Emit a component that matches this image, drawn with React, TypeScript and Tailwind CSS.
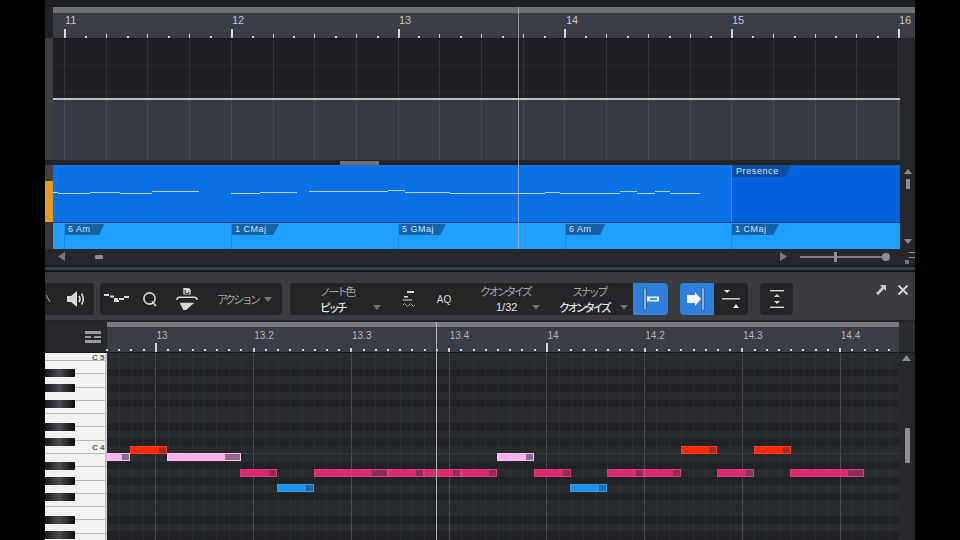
import React from 'react';

const latin = "font-['Liberation_Sans',sans-serif]";
const cjk = "font-['Noto_Sans_CJK_JP',sans-serif]";

// x positions are relative to the ruler, which starts at screen x 53
const topBars = [
  { label: '11', x: 11 },
  { label: '12', x: 178 },
  { label: '13', x: 345 },
  { label: '14', x: 512 },
  { label: '15', x: 678 },
  { label: '16', x: 845 },
];
const topStep = 20.85;

const wave = [
  [8, 13, 192], [13, 45, 193], [45, 75, 192], [75, 107, 193], [107, 154, 191],
  [186, 215, 193], [215, 252, 192], [264, 343, 191], [343, 360, 190], [360, 405, 192],
  [405, 473, 193], [473, 500, 193], [500, 515, 192], [515, 575, 193], [575, 592, 191],
  [592, 610, 193], [610, 625, 191], [625, 655, 193],
];

const chords = [
  { label: '6 Am', x: 19, w: 40 },
  { label: '1 CMaj', x: 186, w: 48 },
  { label: '5 GMaj', x: 353, w: 48 },
  { label: '6 Am', x: 520, w: 40 },
  { label: '1 CMaj', x: 686, w: 48 },
];

// piano roll
const beatW = 97.75;
const rowH = 7.75;
const gridLeft = 107;
const rollBeats = [
  { label: '13', x: 155, big: true },
  { label: '13.2', x: 252.75 },
  { label: '13.3', x: 350.5 },
  { label: '13.4', x: 448.25 },
  { label: '14', x: 546, big: true },
  { label: '14.2', x: 643.75 },
  { label: '14.3', x: 741.5 },
  { label: '14.4', x: 839.25 },
];

const PINK = 'bg-[#fdb4ee]';
const RED = 'bg-[#ff2a0c]';
const MAGENTA = 'bg-[#d9296f]';
const BLUE = 'bg-[#1c93ec]';
const notes = [
  { x1: 107, x2: 130, row: 13, c: PINK, tab: 'bg-[#8e6a8c]' },
  { x1: 130, x2: 167, row: 12, c: RED, tab: 'bg-[#a32d1c]' },
  { x1: 167, x2: 241, row: 13, c: PINK, tab: 'bg-[#8e6a8c]' },
  { x1: 240, x2: 277, row: 15, c: MAGENTA, tab: 'bg-[#8c2e58]' },
  { x1: 277, x2: 314, row: 17, c: BLUE, tab: 'bg-[#1c6aa6]' },
  { x1: 314, x2: 388, row: 15, c: MAGENTA, tab: 'bg-[#8c2e58]' },
  { x1: 388, x2: 424, row: 15, c: MAGENTA, tab: 'bg-[#8c2e58]' },
  { x1: 424, x2: 461, row: 15, c: MAGENTA, tab: 'bg-[#8c2e58]' },
  { x1: 461, x2: 497, row: 15, c: MAGENTA, tab: 'bg-[#8c2e58]' },
  { x1: 497, x2: 534, row: 13, c: PINK, tab: 'bg-[#8e6a8c]' },
  { x1: 534, x2: 571, row: 15, c: MAGENTA, tab: 'bg-[#8c2e58]' },
  { x1: 570, x2: 607, row: 17, c: BLUE, tab: 'bg-[#1c6aa6]' },
  { x1: 607, x2: 644, row: 15, c: MAGENTA, tab: 'bg-[#8c2e58]' },
  { x1: 644, x2: 681, row: 15, c: MAGENTA, tab: 'bg-[#8c2e58]' },
  { x1: 681, x2: 717, row: 12, c: RED, tab: 'bg-[#a32d1c]' },
  { x1: 717, x2: 754, row: 15, c: MAGENTA, tab: 'bg-[#8c2e58]' },
  { x1: 754, x2: 791, row: 12, c: RED, tab: 'bg-[#a32d1c]' },
  { x1: 790, x2: 864, row: 15, c: MAGENTA, tab: 'bg-[#8c2e58]' },
];

const blackRows = [2, 4, 6, 9, 11, 14, 16, 18, 21, 23];
const rowCount = 24;

const labelCls = `text-[11px] leading-[14px] tracking-[-2.6px] whitespace-nowrap text-[#a3a5a8] ${cjk}`;
const valueCls = `text-[11px] leading-[14px] tracking-[-2.6px] whitespace-nowrap font-medium text-[#e4e5e6] ${cjk}`;

function Tri({ down = true, className = 'text-[#77797c]', w = 8, h = 5 }: { down?: boolean; className?: string; w?: number; h?: number }) {
  return (
    <svg width={w} height={h} viewBox="0 0 8 5" preserveAspectRatio="none" className={className}>
      <polygon points={down ? '0,0 8,0 4,5' : '4,0 8,5 0,5'} fill="currentColor" />
    </svg>
  );
}

function TopRuler() {
  const ticks = Array.from({ length: 41 }, (_, i) => i);
  return (
    <div className="relative h-[25px] bg-[#3a3c46]">
      {topBars.map((b) => (
        <span key={b.label} className={`absolute top-[1px] text-[11px] leading-[13px] text-[#c4c6ca] ${latin}`} style={{ left: b.x + 1 }}>
          {b.label}
        </span>
      ))}
      {ticks.map((i) => {
        const left = 11 + i * topStep;
        if (i % 8 === 0) return <div key={i} className="absolute bottom-0 w-[2px] h-[9px] bg-[#d5d6d8]" style={{ left }} />;
        if (i % 2 === 0) return <div key={i} className="absolute bottom-0 w-[1px] h-[4px] bg-[#cfd0d2]" style={{ left }} />;
        return <div key={i} className="absolute bottom-0 w-[2px] h-[2px] bg-[#cfd0d2]" style={{ left }} />;
      })}
    </div>
  );
}

function BarLines({ strong = 'bg-[#4b4e55]' }: { strong?: string }) {
  return (
    <>
      {Array.from({ length: 21 }, (_, i) => (
        <div key={i} className={`absolute top-0 bottom-0 w-[1px] ${strong}`} style={{ left: 11 + i * topStep * 2 }} />
      ))}
    </>
  );
}

function Arrangement() {
  return (
    <div className="flex">
      <div className="w-[8px] flex flex-col">
        <div className="h-[31px] bg-[#202226]" />
        <div className="h-[122px] bg-[#3e4044]" />
        <div className="h-[5px] bg-[#222427]" />
        <div className="h-[16px] bg-[#3e4044]" />
        <div className="h-[41px] bg-[#e09a26]" />
        <div className="h-[27px] bg-[#34363a]" />
      </div>
      <div className="flex-1 min-w-0">
        <div className="h-[6px] bg-[#6e6f71]" />
        <TopRuler />
        <div className="flex">
          <div className="w-[847px] relative">
            <div className="relative h-[60px] bg-[#1f2023] border-t border-[#17181a]">
              <div className="absolute left-0 right-0 top-[26px] h-[1px] bg-[#29292c]" />
              <div className="absolute left-0 right-0 top-[53px] h-[1px] bg-[#29292c]" />
              <BarLines strong="bg-[#323337]" />
            </div>
            <div className="h-[2px] bg-[#bfc0c2]" />
            <div className="relative h-[60px] bg-[#393c47]">
              <BarLines strong="bg-[#474a53]" />
            </div>
            <div className="relative h-[5px] bg-[#222427]">
              <div className="absolute left-[287px] top-[1px] w-[39px] h-[4px] bg-[#707174]" />
            </div>
            <div className="relative h-[57px] bg-[#0a72e6]">
              <div className="absolute left-[678px] top-0 bottom-0 right-0 bg-[#0463dc] border-l border-[#2a93f2]">
                <span className={`block w-[59px] h-[12px] pl-[4px] text-[9px] leading-[12px] tracking-[0.6px] text-[#d4e2f2] bg-[#104f9f] [clip-path:polygon(0_0,100%_0,90%_100%,0_100%)] ${latin}`}>
                  Presence
                </span>
              </div>
              {wave.map(([x1, x2, y], i) => (
                <div key={i} className="absolute h-[1px] bg-[#b4d8f8]" style={{ left: x1 - 8, width: x2 - x1, top: y - 165 }} />
              ))}
            </div>
            <div className="relative h-[27px] bg-[#1f9fff] border-t border-[#0c3f78]">
              {chords.map((c) => (
                <span
                  key={c.x}
                  className={`absolute top-[1px] h-[11px] pl-[4px] text-[9px] leading-[11px] tracking-[0.5px] text-[#d4e6f6] bg-[#1562a6] [clip-path:polygon(0_0,100%_0,88%_100%,0_100%)] ${latin}`}
                  style={{ left: c.x - 8, width: c.w }}
                >
                  {c.label}
                </span>
              ))}
              {chords.map((c) => (
                <div key={c.x} className="absolute top-0 bottom-0 w-[1px] bg-[#1a8ee6]" style={{ left: c.x - 8 }} />
              ))}
            </div>
          </div>
          <div className="flex-1 bg-[#26282b] relative">
            <div className="absolute left-0 right-0 top-[127px] h-[84px] flex flex-col items-center">
              <Tri down={false} className="mt-[4px] text-[#8a8c8f]" />
              <div className="mt-[5px] w-[4px] h-[10px] rounded-[1px] bg-[#8d8f92]" />
              <div className="flex-1" />
              <Tri className="mb-[5px] text-[#8a8c8f]" />
            </div>
          </div>
        </div>
      </div>
    </div>
  );
}

function BottomBar() {
  return (
    <div className="relative h-[16px] bg-[#26282b] flex items-center">
      <div className="absolute left-[13px] top-[3px]">
        <svg width="7" height="9" viewBox="0 0 7 9"><polygon points="7,0 7,9 0,4.5" fill="#77797c" /></svg>
      </div>
      <div className="absolute left-[50px] top-[6px] w-[8px] h-[4px] rounded-[1px] bg-[#8b8d90]" />
      <div className="absolute left-[735px] top-[3px]">
        <svg width="7" height="9" viewBox="0 0 7 9"><polygon points="0,0 0,9 7,4.5" fill="#77797c" /></svg>
      </div>
      <div className="absolute left-[755px] top-[7px] w-[88px] h-[2px] bg-[#7c7e81]" />
      <div className="absolute left-[789px] top-[3px] w-[3px] h-[10px] bg-[#8d8f92]" />
      <div className="absolute left-[837px] top-[4px] w-[8px] h-[8px] rounded-full bg-[#8d8f92]" />
      <div className="absolute left-[860px] top-[11px] w-[4px] h-[4px] bg-[#77797c]" />
      <div className="absolute left-[864px] top-[3px] w-[6px] h-[6px] border-y border-[#8d8f92]" />
    </div>
  );
}

function Group({ w, children, className = '' }: { w: number; children: React.ReactNode; className?: string }) {
  return (
    <div className={`flex items-center h-[32px] rounded-[4px] bg-[#232527] shrink-0 overflow-hidden ${className}`} style={{ width: w }}>
      {children}
    </div>
  );
}

function Speaker() {
  return (
    <svg width="20" height="18" viewBox="0 0 20 18">
      <polygon points="1,6 5,6 11,1 11,17 5,12 1,12" fill="#d6d7d8" />
      <path d="M13 6 Q15 9 13 12 M15.5 3.5 Q19 9 15.5 14.5" stroke="#d6d7d8" strokeWidth="1.6" fill="none" />
    </svg>
  );
}

function Zigzag() {
  return (
    <svg width="26" height="12" viewBox="0 0 26 12">
      <path d="M0 2H5M6 3.5H10M10 6H14M10 8H15M15 6H20M20 4H25" stroke="#d6d7d8" strokeWidth="1.8" fill="none" />
    </svg>
  );
}

function QIcon() {
  return (
    <svg width="16" height="16" viewBox="0 0 16 16">
      <circle cx="7.5" cy="7.5" r="5.6" stroke="#d6d7d8" strokeWidth="1.6" fill="none" />
      <path d="M10 10.5 L14 15" stroke="#d6d7d8" strokeWidth="1.6" />
    </svg>
  );
}

function PasteIcon() {
  return (
    <svg width="22" height="26" viewBox="0 0 24 26">
      <path d="M8 1H14L16 3V8H8Z" fill="#d6d7d8" />
      <path d="M10 3V7H14V5" stroke="#232527" strokeWidth="1" fill="none" />
      <path d="M1 14 Q1 11 4 11 H20 Q23 11 23 14" stroke="#d6d7d8" strokeWidth="1.6" fill="none" />
      <polygon points="4,17 20,17 11,25 8,25" fill="#d6d7d8" />
    </svg>
  );
}

function WaveNoteIcon() {
  return (
    <svg width="14" height="18" viewBox="0 0 14 18">
      <rect x="5" y="1" width="7" height="2" fill="#d6d7d8" />
      <rect x="2" y="6" width="4" height="1.6" fill="#d6d7d8" />
      <path d="M1 10H10" stroke="#d6d7d8" strokeWidth="1" />
      <path d="M1 15 Q2.5 12 4 15 T7 15 T10 15 T13 15" stroke="#a8aaac" strokeWidth="1" fill="none" />
    </svg>
  );
}

function Toolbar() {
  return (
    <div className="relative h-[48px] pt-[11px] bg-[#3a3c3f] flex">
      <Group w={49} className="rounded-l-none">
        <svg width="5" height="8" viewBox="0 0 5 8" className="ml-[1px]"><path d="M0 0L4 7" stroke="#b0b2b4" strokeWidth="1" /></svg>
        <div className="ml-[15px]"><Speaker /></div>
      </Group>
      <Group w={182} className="ml-[6px]">
        <div className="ml-[4px]"><Zigzag /></div>
        <div className="ml-[12px]"><QIcon /></div>
        <div className="ml-[18px]"><PasteIcon /></div>
        <span className={`ml-[19px] ${labelCls}`}>アクション</span>
        <Tri className="ml-[6px] text-[#6f7174]" />
      </Group>
      <Group w={378} className="ml-[8px]">
        <div className="w-[102px] pl-[30px] flex flex-col">
          <span className={labelCls}>ノート色</span>
          <div className="flex items-center mt-[2px]">
            <span className={valueCls}>ピッチ</span>
            <Tri className="ml-[28px] text-[#6f7174]" />
          </div>
        </div>
        <div className="w-[34px] flex justify-center"><WaveNoteIcon /></div>
        <span className={`w-[36px] text-center text-[10px] text-[#d6d7d8] ${latin}`}>AQ</span>
        <div className="w-[86px] flex flex-col pl-[18px]">
          <span className={labelCls}>クオンタイズ</span>
          <div className="flex items-center mt-[2px]">
            <span className={`ml-[16px] text-[11px] leading-[14px] text-[#e4e5e6] ${latin}`}>1/32</span>
            <Tri className="ml-[15px] text-[#6f7174]" />
          </div>
        </div>
        <div className="w-[85px] flex flex-col pl-[11px]">
          <span className={`ml-[13px] ${labelCls}`}>スナップ</span>
          <div className="flex items-center mt-[2px]">
            <span className={valueCls}>クオンタイズ</span>
            <Tri className="ml-[11px] text-[#6f7174]" />
          </div>
        </div>
        <div className="w-[35px] h-full bg-[#2f7fdc] flex items-center justify-center">
          <svg width="20" height="24" viewBox="0 0 20 24">
            <rect x="3" y="1" width="2" height="22" rx="1" fill="#cfe3f8" stroke="#12365f" strokeWidth="0.6" />
            <rect x="6" y="9.5" width="12" height="5" fill="#e8f0f8" />
            <rect x="9" y="11" width="7" height="2" fill="#4d8fd8" />
          </svg>
        </div>
      </Group>
      <Group w={68} className="ml-[12px]">
        <div className="w-[34px] h-full bg-[#2f7fdc] flex items-center justify-center">
          <svg width="24" height="24" viewBox="0 0 24 24">
            <polygon points="2,8 10,8 10,5 16,12 10,19 10,16 2,16" fill="#f2f4f6" />
            <rect x="17" y="0.5" width="2" height="23" rx="1" fill="#cfe3f8" stroke="#12365f" strokeWidth="0.6" />
          </svg>
        </div>
        <div className="flex-1 flex justify-center">
          <svg width="20" height="20" viewBox="0 0 20 20">
            <polygon points="3,1 9,1 6,4" fill="#e8e9ea" />
            <rect x="1" y="9" width="18" height="1.6" fill="#c6c7c9" />
            <polygon points="12,19 18,19 15,15" fill="#e8e9ea" />
          </svg>
        </div>
      </Group>
      <Group w={33} className="ml-[12px] justify-center">
        <svg width="16" height="20" viewBox="0 0 16 20">
          <rect x="1" y="1" width="14" height="1.4" fill="#d6d7d8" />
          <polygon points="8,5 11,8 5,8" fill="#d6d7d8" />
          <polygon points="8,15 11,12 5,12" fill="#d6d7d8" />
          <rect x="1" y="17.6" width="14" height="1.4" fill="#d6d7d8" />
        </svg>
      </Group>
      <div className="absolute left-[830px] top-[12px]">
        <svg width="12" height="12" viewBox="0 0 12 12">
          <polygon points="5,1 11,1 11,7 9,5 3,11 1,9 7,3" fill="#c9cacb" />
        </svg>
      </div>
      <div className="absolute left-[852px] top-[12px]">
        <svg width="12" height="12" viewBox="0 0 12 12">
          <path d="M1.5 1.5L10.5 10.5M10.5 1.5L1.5 10.5" stroke="#d6d7d8" strokeWidth="1.8" />
        </svg>
      </div>
    </div>
  );
}

function RollHeader() {
  const dots = Array.from({ length: 65 }, (_, i) => i);
  return (
    <div className="flex h-[32px] border-t-2 border-[#222427]">
      <div className="w-[62px] bg-[#26282b] flex justify-end items-start pr-[6px] pt-[9px]">
        <svg width="16" height="13" viewBox="0 0 16 13">
          <rect x="0" y="0" width="16" height="3" fill="#9b9da0" />
          <rect x="0" y="5" width="6" height="2" fill="#9b9da0" />
          <rect x="9" y="5" width="7" height="2" fill="#9b9da0" />
          <rect x="0" y="9" width="16" height="3" fill="#9b9da0" />
        </svg>
      </div>
      <div className="w-[792px]">
        <div className="h-[5px] bg-[#7a7b7e]" />
        <div className="relative h-[25px] bg-[#3a3c46]">
          {rollBeats.map((b) => (
            <span key={b.label} className={`absolute top-[2px] text-[10px] leading-[13px] text-[#b4b6ba] ${latin}`} style={{ left: b.x - gridLeft + 1.5 }}>
              {b.label}
            </span>
          ))}
          {dots.map((i) => {
            const left = i * (beatW / 8) - 1;
            if (i % 32 === 4) return <div key={i} className="absolute bottom-0 w-[2px] h-[9px] bg-[#d5d6d8]" style={{ left }} />;
            if (i % 8 === 4) return <div key={i} className="absolute bottom-0 w-[2px] h-[4px] bg-[#cfd0d2]" style={{ left }} />;
            return <div key={i} className="absolute bottom-[1px] w-[2px] h-[2px] bg-[#cfd0d2]" style={{ left }} />;
          })}
        </div>
      </div>
      <div className="flex-1 bg-[#2a2c2f]" />
    </div>
  );
}

function Keyboard() {
  const lines = Array.from({ length: 15 }, (_, i) => 453 + (i - 7) * 13.29 - 353);
  return (
    <div className="relative w-[62px] h-full bg-[#f1f1ef] overflow-hidden border-r-2 border-[#c4c5c7]">
      {lines.map((y) => (
        <div key={y} className="absolute left-0 right-0 h-[1px] bg-[#b8b8b8]" style={{ top: y }} />
      ))}
      {blackRows.map((r) => (
        <div
          key={r}
          className="absolute left-0 w-[30px] h-[8px] rounded-r-[1px] bg-gradient-to-r from-[#17181a] via-[#4a4c4f] to-[#141517] border-r-2 border-[#0f1011]"
          style={{ top: r * rowH }}
        />
      ))}
      <span className={`absolute left-[47px] top-0 whitespace-nowrap text-[8px] leading-[10px] font-bold text-[#55575a] ${latin}`}>C 5</span>
      <span className={`absolute left-[47px] top-[90px] whitespace-nowrap text-[8px] leading-[10px] font-bold text-[#55575a] ${latin}`}>C 4</span>
    </div>
  );
}

function NoteGrid() {
  const verticals = Array.from({ length: 65 }, (_, i) => i);
  return (
    <div className="relative w-[792px] h-full overflow-hidden bg-[#1f2124]">
      <div className="flex flex-col">
        {Array.from({ length: rowCount }, (_, i) => (
          <div
            key={i}
            className={blackRows.includes(i) ? 'bg-[#202225]' : 'bg-[#282b2e]'}
            style={{ height: rowH }}
          />
        ))}
      </div>
      {verticals.map((i) => (
        <div
          key={i}
          className={`absolute top-0 bottom-0 w-[1px] ${i % 8 === 4 ? 'bg-[#46494d]' : 'bg-[#32353a]/50'}`}
          style={{ left: i * (beatW / 8) - 0.5 }}
        />
      ))}
      <div className="absolute left-0 right-0 h-[1px] bg-[#383b3e]" style={{ top: 100 }} />
      {notes.map((n) => {
        const w = n.x2 - n.x1;
        return (
          <div
            key={n.x1}
            className={`absolute ${n.c} h-[8px] border border-white/10`}
            style={{ left: n.x1 - gridLeft, width: w, top: n.row * rowH - 0.5 }}
          >
            <div className={`absolute right-0 top-0 bottom-0 ${n.tab}`} style={{ width: w > 60 ? 15 : 7 }} />
          </div>
        );
      })}
    </div>
  );
}

function PianoRoll() {
  return (
    <div className="flex h-[188px] bg-[#26282b] border-t border-[#17181a] relative">
      <Keyboard />
      <NoteGrid />
      <div className="flex-1 relative">
        <div className="absolute left-[3px] top-[2px]">
          <Tri down={false} className="text-[#8a8c8f]" w={9} h={6} />
        </div>
        <div className="absolute left-[6px] top-[75px] w-[5px] h-[35px] rounded-[1px] bg-[#8d8f92]" />
      </div>
    </div>
  );
}

export default function App() {
  return (
    <div className="w-[960px] h-[540px] bg-black overflow-hidden flex justify-center">
      <div className="relative w-[870px] h-[540px] flex flex-col bg-[#26282b]">
        <div className="h-[7px] bg-[#1f2328] border-t-2 border-b-2 border-[#1b1d20]" />
        <Arrangement />
        <BottomBar />
        <div className="h-[2px] bg-[#17181a]" />
        <div className="h-[3px] bg-[#2b3f4f]" />
        <div className="h-[2px] bg-[#17181a]" />
        <Toolbar />
        <RollHeader />
        <PianoRoll />
        {/* playhead lines */}
        <div className="absolute left-[473px] top-[7px] h-[242px] w-[1px] bg-[#b9bbbf]/70" />
        <div className="absolute left-[391px] top-[322px] h-[218px] w-[1px] bg-[#d0d1d3]/80" />
      </div>
    </div>
  );
}
